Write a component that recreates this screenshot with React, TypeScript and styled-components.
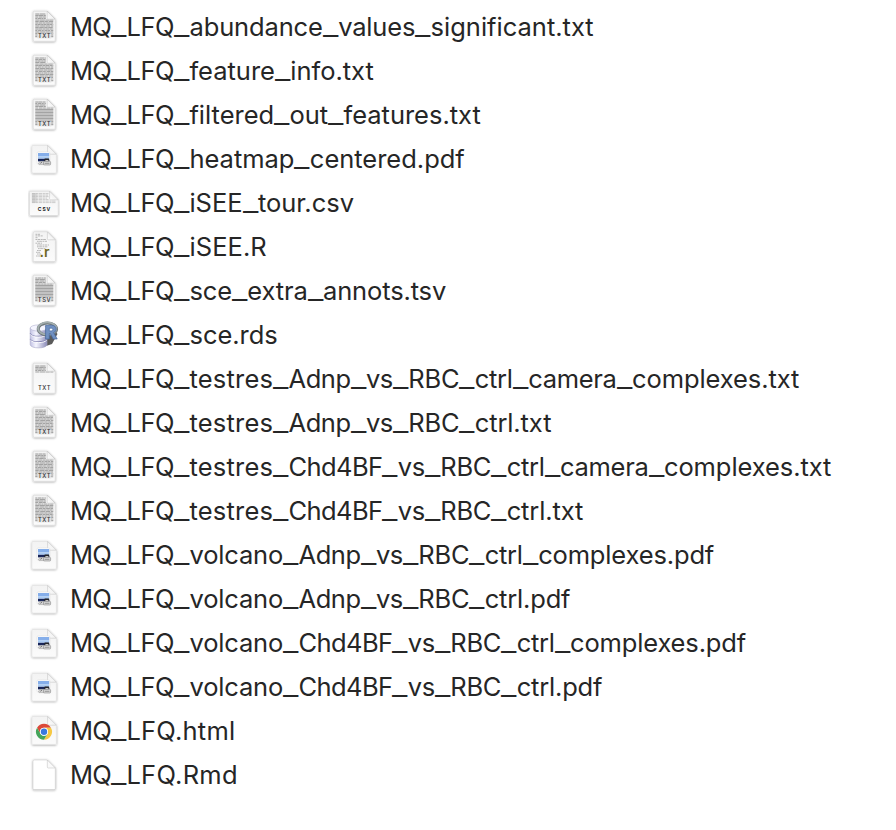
import React from "react";
import styled, { createGlobalStyle } from "styled-components";

const GlobalStyle = createGlobalStyle`
  body { margin: 0; background: #fff; }
`;

const FileList = styled.ul`
  list-style: none;
  margin: 0;
  padding: 5px 0 0 28px;
  box-sizing: border-box;
  overflow: hidden;
  width: 896px;
  height: 830px;
`;

const FileRow = styled.li`
  display: flex;
  align-items: center;
  height: 44px;
`;

const IconArt = styled.svg`
  flex: none;
  width: 32px;
  height: 44px;
  margin-right: 10px;
`;

const FileName = styled.span`
  font: 400 25.5px/44px Inter, "Liberation Sans", sans-serif;
  color: #262626;
  white-space: pre;
`;

const Word = styled.span<{ $tracking: number }>`
  letter-spacing: ${(p) => p.$tracking}px;
`;

/* A wide underscore that touches the words on both sides of it. */
const Underscore = styled.span`
  display: inline-block;
  width: 11.63px;
  margin-right: 3.77px;
  line-height: 1;
  transform: translateY(-1px) scaleX(1.324);
  transform-origin: left;
`;

const IconLabel = styled.text<{ $weight?: number }>`
  font-family: Inter, sans-serif;
  font-weight: ${(p) => p.$weight ?? 600};
  text-anchor: middle;
`;

/* Rows of short grey dashes standing for the text on a document preview. */
const Lines = ({ seed, from, to, left, right, fold, solid }: {
  seed: number; from: number; to: number; left: number; right: number; fold: number; solid?: boolean;
}) => {
  const rows = [];
  for (let y = from, i = 0; y < to; y += 1.5, i++) {
    const end = y < fold ? right - 7.5 : right;
    const a = 2 + ((i * 7 + seed * 3) % 4) * 0.7;
    const b = 0.3 + ((i * 5 + seed) % 3) * 0.25;
    rows.push(
      <path
        key={i}
        d={`M${left} ${y}H${end}`}
        stroke="#8b8b8b"
        strokeWidth="0.95"
        strokeDasharray={solid && y > fold ? undefined : `${a} ${b} ${a + 1.1} 0.5`}
        opacity="0.75"
      />
    );
  }
  return <g><rect x={left} y={fold} width={right - left} height={Math.max(0, to - fold)} fill="#d2d2d2" opacity="0.6" /><rect x={left} y={from - 0.5} width={right - left - 7.5} height={Math.min(fold, to) - from} fill="#d2d2d2" opacity="0.6" />{rows}</g>;
};

const Sheet = ({ x, y, w, h, fold, fill = "url(#paper)", line = "#cacaca" }: {
  x: number; y: number; w: number; h: number; fold: number; fill?: string; line?: string;
}) => (
  <path
    d={`M${x + 1} ${y}H${x + w - fold}L${x + w} ${y + fold}V${y + h - 1}Q${x + w} ${y + h} ${x + w - 1} ${y + h}H${x + 1}Q${x} ${y + h} ${x} ${y + h - 1}V${y + 1}Q${x} ${y} ${x + 1} ${y}Z`}
    fill={fill}
    stroke={line}
    strokeWidth="0.4"
    filter="url(#lift)"
  />
);

const Corner = ({ x, y, size, fill = "url(#curl)" }: { x: number; y: number; size: number; fill?: string }) => (
  <path
    d={`M${x} ${y}V${y + size - 1}Q${x} ${y + size} ${x + 1} ${y + size}H${x + size}Z`}
    fill={fill}
    stroke="#bcbcbc"
    strokeWidth="0.5"
  />
);

const TextDoc = ({ label, seed, short, solid }: { label: string; seed: number; short?: boolean; solid?: boolean }) => (
  <>
    <Sheet x={5.2} y={6.2} w={22} h={30} fold={8} />
    <Lines seed={seed} from={9} to={short ? 15.2 : 33} left={7.3} right={25.3} fold={15} solid={solid} />
    <rect x="9.3" y="28" width="14" height="5.6" fill="#e9e9e9" opacity={short ? 0 : 0.8} />
    <Corner x={19.2} y={6.2} size={8} />
    <IconLabel x="16.5" y="33" fontSize="5.8" letterSpacing="0.6" fill="#333" $weight={500}>{label}</IconLabel>
  </>
);

const PdfDoc = () => (
  <>
    <Sheet x={4} y={8.4} w={24.4} h={27.6} fold={8.8} line="#dadada" />
    <Corner x={19.6} y={8.4} size={8.8} />
    <rect x="9" y="15" width="13" height="12" rx="1" fill="#fff" stroke="#d9d9d9" strokeWidth="0.5" />
    <path d="M10 16H21.2V19.2H10Z" fill="#85aeea" />
    <path d="M10 19.2H21.2V21.8H10Z" fill="#a9caf3" />
    <path d="M10 21.8H21.2V24.4H10Z" fill="#172458" />
    <path d="M10.4 26L12.6 24.4H16V27.6H11Z" fill="#d4d4d4" stroke="#999" strokeWidth="0.5" />
    <path d="M12.3 26.3L14 25.2" stroke="#555" strokeWidth="0.7" />
    <path d="M16.7 21.4H20.8L21.4 24H16Z" fill="#25272b" />
    <path d="M17.4 23H20.4V24.6H17.4Z" fill="#c7c7c7" />
    <rect x="15.6" y="24.4" width="7" height="3.6" rx="0.8" fill="#d8d8d8" stroke="#777" strokeWidth="0.5" />
    <path d="M16.8 26.3H21.4" stroke="#777" strokeWidth="0.7" />
  </>
);

const CsvDoc = () => (
  <>
    <Sheet x={1.4} y={10.2} w={28.8} h={24.3} fold={8.6} />
    <g stroke="#aaa" strokeWidth="0.8" opacity="0.7" strokeDasharray="3.4 0.6 2.2 0.5">
      <path d="M4 12.6H20.5M4 14.1H20M4 15.6H20.5M4 17.1H19M4 18.6H20.5M4 20.1H27.5M4 21.6H27.5" />
    </g>
    <path d="M3.8 12H8.5V22H3.8Z" fill="#b2b2b2" opacity="0.4" />
    <Corner x={21.6} y={10.2} size={8.6} />
    <IconLabel x="16.5" y="30.3" fontSize="5" letterSpacing="0.9" fill="#222" $weight={700}>CSV</IconLabel>
  </>
);

const RScriptDoc = () => (
  <>
    <Sheet x={5.2} y={6.8} w={22.2} h={29.8} fold={8} />
    <g stroke="#999" strokeWidth="0.9" opacity="0.75" strokeDasharray="1.7 0.5 2.7 0.6">
      <path d="M7.5 9.3H12M7.5 10.9H15M7.5 12.7H10M7.5 14.5H18M9 16.3H19M7.5 18.2H14M9 20H21M9 21.8H20M10 23.6H18M9 25.5H13M8 27.3H12M9 29H13M8 31H12" />
    </g>
    <Corner x={19.4} y={6.8} size={8} />
    <IconLabel x="16.6" y="32.2" fontSize="14" fill="#6f6722">.r</IconLabel>
  </>
);

const DatabaseIcon = () => (
  <>
    <path d="M15 34L24 31L29.5 21L27 18L15 21Z" fill="#303030" opacity="0.8" filter="url(#soft)" />
    <path d="M2.2 15V31.5C2.2 36 19 36 19 31.5V15Z" fill="url(#disk)" stroke="#a7a7c8" strokeWidth="0.6" />
    <ellipse cx="10.6" cy="15" rx="8.4" ry="3.1" fill="#f5f5ff" stroke="#b2b2d0" strokeWidth="0.6" />
    <path d="M2.2 20.3C3.4 24.3 17.6 24.3 19 20.3M2.2 25.8C3.4 29.8 17.6 29.8 19 25.8" fill="none" stroke="#8484b3" strokeWidth="1.1" />
    <path d="M2.4 21.5C4.5 25 16.5 25 18.8 21.5M2.4 27C4.5 30.5 16.5 30.5 18.8 27" fill="none" stroke="#fff" strokeWidth="0.9" />
    <ellipse cx="19.4" cy="15.9" rx="9.2" ry="6" fill="none" stroke="#70787b" strokeWidth="3" />
    <ellipse cx="19.2" cy="15.4" rx="9.2" ry="6" fill="none" stroke="#a3aeae" strokeWidth="1.8" />
    <path d="M17.6 26V12.3H23.6C29.4 12.3 29.3 18.4 25.6 19.6L29.2 26H25.1L22.4 20.6H21.3V26ZM21.3 15.2V17.9H23.3C25.4 17.9 25.4 15.2 23.3 15.2Z" fill="#7090c1" stroke="#43669c" strokeWidth="0.7" fillRule="evenodd" />
  </>
);

const HtmlDoc = () => (
  <>
    <Sheet x={4} y={7.4} w={24.4} h={28} fold={8.8} line="#dadada" />
    <Corner x={19.6} y={7.4} size={8.8} />
    <g transform="translate(16 22.8)">
      <circle r="8" fill="#fff" />
      <path d="M-6.93-4A8 8 0 0 1 6.93-4H0A4 4 0 0 0-3.46 2Z" fill="#db4939" />
      <path d="M6.93-4A8 8 0 0 1 0 8L3.46 2A4 4 0 0 0 0-4Z" fill="#f6c843" />
      <path d="M0 8A8 8 0 0 1-6.93-4L-3.46 2A4 4 0 0 0 3.46 2Z" fill="#45a45a" />
      <circle r="4" fill="#fff" />
      <circle r="3.2" fill="#3979dd" />
    </g>
  </>
);

const BlankDoc = () => (
  <>
    <Sheet x={5} y={7} w={22.3} h={29.6} fold={8} fill="#fff" line="#b5b5b5" />
    <Corner x={19.3} y={7} size={8} fill="#fafafa" />
  </>
);

const SharedPaint = () => (
  <defs>
    <linearGradient id="paper" x2="0" y2="1">
      <stop stopColor="#f3f3f3" />
      <stop offset="1" stopColor="#fbfbfb" />
    </linearGradient>
    <linearGradient id="curl" x1="0" y1="1" x2="1" y2="0">
      <stop stopColor="#fff" />
      <stop offset="0.5" stopColor="#f2f2f2" />
      <stop offset="1" stopColor="#c8c8c8" />
    </linearGradient>
    <linearGradient id="disk">
      <stop stopColor="#c2c2e4" />
      <stop offset="0.35" stopColor="#f6f6ff" />
      <stop offset="1" stopColor="#8b8bb8" />
    </linearGradient>
    <filter id="lift" x="-20%" y="-20%" width="140%" height="140%">
      <feDropShadow dx="0" dy="0.5" stdDeviation="0.8" floodColor="#000" floodOpacity="0.42" />
    </filter>
    <filter id="soft"><feGaussianBlur stdDeviation="0.7" /></filter>
  </defs>
);

const wordTracking: Record<string, number> = {
  MQ: -0.75,
  LFQ: -0.45,
  abundance: -0.13,
  values: -0.19,
  "significant.txt": 0,
  testres: 0.2,
  Adnp: -0.47,
  vs: -0.4,
  RBC: -0.24,
  ctrl: -0.27,
  "ctrl.txt": -0.11,
  "ctrl.pdf": -0.18,
  camera: -0.3,
  "complexes.txt": -0.08,
  "complexes.pdf": -0.15,
  Chd4BF: -0.6,
  volcano: -0.16,
  sce: -0.14,
  extra: -0.14,
  "annots.tsv": -0.14,
  "iSEE.R": 0.07,
  "LFQ.html": 0.23,
  "LFQ.Rmd": 0.26,
};

const files: { name: string; icon: React.ReactNode }[] = [
  { name: "MQ_LFQ_abundance_values_significant.txt", icon: <TextDoc label="TXT" seed={1} /> },
  { name: "MQ_LFQ_feature_info.txt", icon: <TextDoc label="TXT" seed={2} /> },
  { name: "MQ_LFQ_filtered_out_features.txt", icon: <TextDoc label="TXT" seed={3} solid /> },
  { name: "MQ_LFQ_heatmap_centered.pdf", icon: <PdfDoc /> },
  { name: "MQ_LFQ_iSEE_tour.csv", icon: <CsvDoc /> },
  { name: "MQ_LFQ_iSEE.R", icon: <RScriptDoc /> },
  { name: "MQ_LFQ_sce_extra_annots.tsv", icon: <TextDoc label="TSV" seed={4} solid /> },
  { name: "MQ_LFQ_sce.rds", icon: <DatabaseIcon /> },
  { name: "MQ_LFQ_testres_Adnp_vs_RBC_ctrl_camera_complexes.txt", icon: <TextDoc label="TXT" seed={5} short /> },
  { name: "MQ_LFQ_testres_Adnp_vs_RBC_ctrl.txt", icon: <TextDoc label="TXT" seed={6} /> },
  { name: "MQ_LFQ_testres_Chd4BF_vs_RBC_ctrl_camera_complexes.txt", icon: <TextDoc label="TXT" seed={7} /> },
  { name: "MQ_LFQ_testres_Chd4BF_vs_RBC_ctrl.txt", icon: <TextDoc label="TXT" seed={8} /> },
  { name: "MQ_LFQ_volcano_Adnp_vs_RBC_ctrl_complexes.pdf", icon: <PdfDoc /> },
  { name: "MQ_LFQ_volcano_Adnp_vs_RBC_ctrl.pdf", icon: <PdfDoc /> },
  { name: "MQ_LFQ_volcano_Chd4BF_vs_RBC_ctrl_complexes.pdf", icon: <PdfDoc /> },
  { name: "MQ_LFQ_volcano_Chd4BF_vs_RBC_ctrl.pdf", icon: <PdfDoc /> },
  { name: "MQ_LFQ.html", icon: <HtmlDoc /> },
  { name: "MQ_LFQ.Rmd", icon: <BlankDoc /> },
];

export default function App() {
  return (
    <>
      <GlobalStyle />
      <FileList>
        {files.map((file, i) => (
          <FileRow key={file.name}>
            <IconArt viewBox="0 0 32 44" aria-hidden="true">
              {i === 0 && <SharedPaint />}
              {file.icon}
            </IconArt>
            <FileName>
              {file.name.split("_").map((word, n) => (
                <React.Fragment key={n}>
                  {n > 0 && <Underscore>_</Underscore>}
                  <Word $tracking={wordTracking[word] ?? -0.02}>{word}</Word>
                </React.Fragment>
              ))}
            </FileName>
          </FileRow>
        ))}
      </FileList>
    </>
  );
}
